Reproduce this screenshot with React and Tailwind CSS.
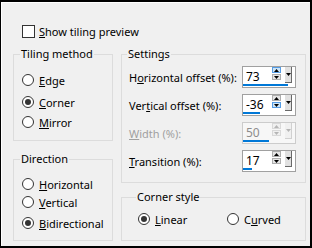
const FONT = "font-['Noto_Sans',sans-serif]"

function Mn({ text, at }) {
  return (
    <>
      {text.slice(0, at)}
      <u>{text[at]}</u>
      {text.slice(at + 1)}
    </>
  )
}

function Radio({ checked, children, className = '' }) {
  return (
    <div className={`flex h-[12px] items-center gap-[5px] ${className}`}>
      <span className="flex h-[12px] w-[12px] items-center justify-center rounded-full border border-[#333333] bg-white">
        {checked && <span className="h-[6px] w-[6px] rounded-full bg-[#333333]" />}
      </span>
      <span className="whitespace-nowrap leading-none">{children}</span>
    </div>
  )
}

function Group({ title, className, children }) {
  return (
    <fieldset className={`border border-[#dcdcdc] ${className}`}>
      <legend className="-ml-[2px] px-[1px] leading-[14px]">{title}</legend>
      {children}
    </fieldset>
  )
}

function Arrow({ up, color }) {
  return (
    <svg width="5" height="3" viewBox="0 0 5 3">
      <path d={up ? 'M0 3 L2.5 0 L5 3Z' : 'M0 0 L5 0 L2.5 3Z'} fill={color} />
    </svg>
  )
}

function StepButton({ up, hot, disabled }) {
  const look = hot
    ? 'border-[#569de5] bg-[#cce4f7]'
    : disabled
      ? 'border-[#d9d9d9] bg-[#f0f0f0]'
      : 'border-[#adadad] bg-[#e5e5e5]'
  return (
    <div className={`flex h-[6px] w-[9px] items-center justify-center border ${look}`}>
      <Arrow up={up} color={disabled ? '#b5b5b5' : '#000000'} />
    </div>
  )
}

function Spin({ value, pct, hot, disabled }) {
  return (
    <div
      className={`flex h-[22px] w-[54px] shrink-0 flex-col border ${
        disabled ? 'border-[#cccccc] bg-[#f7f7f7]' : 'border-[#a0a0a0] bg-white'
      }`}
    >
      <div className="flex h-[16px]">
        <span className={`flex-1 pl-[3px] pt-[3px] text-[12px] leading-[14px] ${disabled ? 'text-[#8d8d8d]' : ''}`}>
          {value}
        </span>
        <div className="flex w-[9px] flex-col gap-[1px]">
          <StepButton up hot={hot === 'up'} disabled={disabled} />
          <StepButton hot={hot === 'down'} disabled={disabled} />
        </div>
        <div
          className={`ml-[4px] mr-[3px] flex h-[16px] w-[7px] items-center justify-center border-b border-r ${
            disabled ? 'border-[#d0d0d0] bg-[#f0f0f0]' : 'border-[#696969] bg-[#e1e1e1]'
          }`}
        >
          <Arrow color={disabled ? '#b5b5b5' : '#000000'} />
        </div>
      </div>
      <div className="mt-[1px] h-[2px] bg-[#0078d7]" style={{ width: `${pct}%` }} />
    </div>
  )
}

const SETTINGS = [
  { text: 'Horizontal offset (%):', at: 1, value: '73', pct: 86.5, hot: 'up' },
  { text: 'Vertical offset (%):', at: 3, value: '-36', pct: 32, hot: 'down' },
  { text: 'Width (%):', at: 0, value: '50', pct: 50, disabled: true },
  { text: 'Transition (%):', at: 0, value: '17', pct: 17 },
]

export default function App() {
  return (
    <div className={`h-[248px] w-[312px] border-2 border-l border-black text-[11px] text-black ${FONT}`}>
      <div className="h-full border-l border-t border-white bg-[#f0f0f0] pl-[11px] pt-[22px]">
        <div className="flex h-[13px] items-center gap-[4px] pl-[9px]">
          <span className="h-[13px] w-[13px] border border-[#333333] bg-white" />
          <span className="leading-none">
            <Mn text="Show tiling preview" at={0} />
          </span>
        </div>

        <div className="mt-[9px] flex gap-[8px]">
          <div className="flex w-[100px] flex-col">
            <Group title="Tiling method" className="pb-[12px] pl-[8px]">
              <Radio className="mt-[13px]">
                <Mn text="Edge" at={0} />
              </Radio>
              <Radio checked className="mt-[10px]">
                <Mn text="Corner" at={0} />
              </Radio>
              <Radio className="mt-[8px]">
                <Mn text="Mirror" at={0} />
              </Radio>
            </Group>
            <Group title="Direction" className="mt-[11px] pb-[11px] pl-[8px]">
              <Radio className="mt-[12px]">
                <Mn text="Horizontal" at={0} />
              </Radio>
              <Radio className="mt-[6px]">
                <Mn text="Vertical" at={0} />
              </Radio>
              <Radio checked className="mt-[9px]">
                <Mn text="Bidirectional" at={0} />
              </Radio>
            </Group>
          </div>

          <div className="flex w-[185px] flex-col">
            <Group title="Settings" className="pb-[10px] pl-[7px] pr-[9px] pt-[5px]">
              <div className="flex flex-col gap-[6px]">
                {SETTINGS.map((row) => (
                  <div key={row.text} className="flex h-[22px] items-center">
                    <span
                      className={`flex-1 whitespace-nowrap leading-none ${row.disabled ? 'text-[#a0a0a0]' : ''}`}
                    >
                      <Mn text={row.text} at={row.at} />
                    </span>
                    <Spin value={row.value} pct={row.pct} hot={row.hot} disabled={row.disabled} />
                  </div>
                ))}
              </div>
            </Group>
            <Group title="Corner style" className="mt-[7px] pb-[15px] pl-[16px]">
              <div className="mt-[9px] flex">
                <Radio checked className="w-[89px]">
                  <Mn text="Linear" at={0} />
                </Radio>
                <Radio>
                  <Mn text="Curved" at={1} />
                </Radio>
              </div>
            </Group>
          </div>
        </div>
      </div>
    </div>
  )
}
